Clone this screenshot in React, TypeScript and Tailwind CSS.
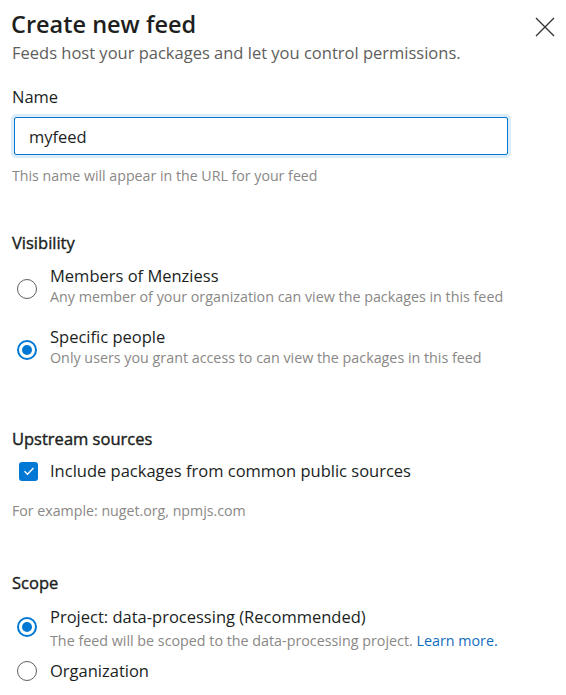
import React, { useState } from 'react';

const Radio = ({ checked, className = 'mt-[18px]' }: { checked: boolean; className?: string }) => (
  <span
    className={`flex h-5 w-5 shrink-0 items-center justify-center rounded-full border ${
      checked ? 'border-2 border-[#0078d4]' : 'border-[#605e5c]'
    } ${className}`}
  >
    {checked && <span className="h-[10px] w-[10px] rounded-full bg-[#0078d4]" />}
  </span>
);

const Option = ({
  checked,
  label,
  desc,
  className = '',
  radioClass,
  descClass = '',
}: {
  checked: boolean;
  label: string;
  desc?: React.ReactNode;
  className?: string;
  radioClass?: string;
  descClass?: string;
}) => (
  <div className={`flex items-start gap-[13px] pl-[5px] ${className}`}>
    <Radio checked={checked} className={radioClass} />
    <div className="pt-[4px]">
      <div className="text-[16.5px] leading-[22px] text-[#201f1e]">{label}</div>
      {desc && <div className={`text-[14.3px] leading-[20px] text-[#8a8886] ${descClass}`}>{desc}</div>}
    </div>
  </div>
);

export default function App() {
  const [name, setName] = useState('myfeed');

  return (
    <div className="h-[695px] w-[566px] overflow-hidden bg-white pl-3 font-['Open_Sans','Noto_Sans',sans-serif] text-[#201f1e]">
      {/* Header */}
      <div className="flex items-start justify-between pr-[11px]">
        <div className="pt-2">
          <h1 className="-ml-[1px] text-[23.5px] font-semibold leading-[32px]">Create new feed</h1>
          <p className="mt-[2px] text-[16.5px] leading-[22px] text-[#605e5c]">
            Feeds host your packages and let you control permissions.
          </p>
        </div>
        <button className="mt-[17px] text-[#323130]">
          <svg width="20" height="20" viewBox="0 0 20 20" fill="none" stroke="currentColor" strokeWidth="1.3">
            <path d="M1 1 L19 19 M19 1 L1 19" />
          </svg>
        </button>
      </div>

      {/* Name */}
      <label className="mt-[22px] block text-[16.5px] leading-[22px]">Name</label>
      <input
        value={name}
        onChange={(e) => setName(e.target.value)}
        className="ml-[2px] mt-[9px] block h-[38px] w-[494px] rounded-[2px] border border-[#0078d4] px-[14px] text-[16.5px] text-[#201f1e] outline-none ring-[3px] ring-[#deecf9]"
      />
      <p className="mt-[12px] text-[14.2px] leading-[18px] text-[#8a8886]">
        This name will appear in the URL for your feed
      </p>

      {/* Visibility */}
      <h2 className="mt-[47px] text-[16.5px] leading-[22px] [-webkit-text-stroke:0.4px_#201f1e]">Visibility</h2>
      <Option
        className="mt-[7px]"
        checked={false}
        label="Members of Menziess"
        desc="Any member of your organization can view the packages in this feed"
      />
      <Option
        className="mt-[15px]"
        checked={true}
        label="Specific people"
        desc="Only users you grant access to can view the packages in this feed"
      />

      {/* Upstream */}
      <h2 className="mt-[60px] text-[16.5px] leading-[22px] [-webkit-text-stroke:0.4px_#201f1e]">Upstream sources</h2>
      <div className="mt-[10px] flex items-center gap-[12px] pl-[7px]">
        <span className="flex h-[19px] w-[19px] items-center justify-center rounded-[3px] bg-[#0078d4]">
          <svg width="12" height="12" viewBox="0 0 12 12" fill="none" stroke="white" strokeWidth="1.4">
            <path d="M1.5 6.2 L4.5 9.2 L10.5 3" />
          </svg>
        </span>
        <span className="text-[16.5px] leading-[22px]">Include packages from common public sources</span>
      </div>
      <p className="mt-[20px] text-[14.2px] leading-[18px] text-[#8a8886]">For example: nuget.org, npmjs.com</p>

      {/* Scope */}
      <h2 className="mt-[52px] text-[16.5px] leading-[22px] [-webkit-text-stroke:0.4px_#201f1e]">Scope</h2>
      <Option
        className="mt-[8px]"
        radioClass="mt-[15px]"
        descClass="mt-[3px]"
        checked={true}
        label="Project: data-processing (Recommended)"
        desc={
          <>
            The feed will be scoped to the data-processing project.{' '}
            <a href="#" className="text-[#0f6cbd]">
              Learn more.
            </a>
          </>
        }
      />
      <Option className="mt-[5px]" radioClass="mt-[5px]" checked={false} label="Organization" />
    </div>
  );
}
